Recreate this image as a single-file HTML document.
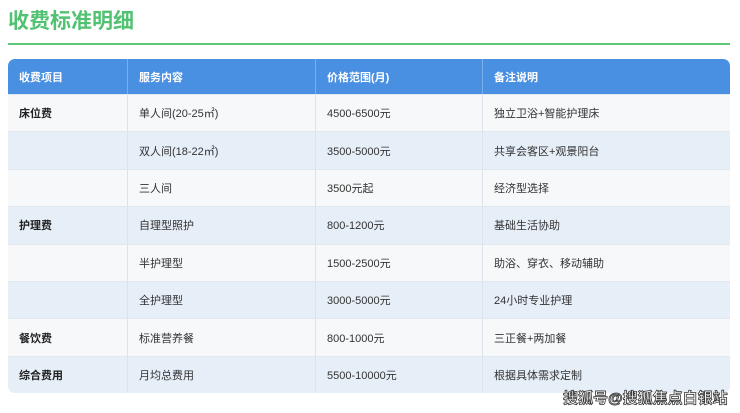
<!DOCTYPE html>
<html><head><meta charset="utf-8"><style>
body{margin:0;width:740px;height:413px;background:#fff;font-family:"Liberation Sans","Noto Sans CJK SC",sans-serif;position:relative;overflow:hidden}
h1{position:absolute;left:8px;top:8px;margin:0;font-size:21px;color:#52c272;font-weight:bold;line-height:28px}
.line{position:absolute;left:8px;top:43px;width:722px;height:2px;background:#5cc878}
table{position:absolute;left:8px;top:59px;width:722px;border-collapse:separate;border-spacing:0;border-radius:7px;overflow:hidden;font-size:11px;color:#333}
th{background:#4a90e2;color:#fff;text-align:left;height:35px;padding:0 0 0 11px;font-weight:bold;border-right:1px solid #79aee9}
th:last-child,td:last-child{border-right:none}
td{height:37.4px;padding:0 0 0 11px;border-right:1px solid #dde3ea;border-top:1px solid #e3e8ee;box-sizing:border-box}
tr:nth-child(odd) td{background:#f7f8fa}
tr:nth-child(even) td{background:#e6eef8}
td.b{font-weight:bold;color:#222}
.wm{position:absolute;left:563px;top:387px;font-size:15px;font-weight:bold;color:#fff;-webkit-text-stroke:0.8px #333;white-space:nowrap}
</style></head><body>
<h1>收费标准明细</h1>
<div class="line"></div>
<table>
<colgroup><col style="width:120px"><col style="width:188px"><col style="width:167px"><col></colgroup>
<thead><tr><th>收费项目</th><th>服务内容</th><th>价格范围(月)</th><th>备注说明</th></tr></thead>
<tbody>
<tr><td class="b">床位费</td><td>单人间(20-25㎡)</td><td>4500-6500元</td><td>独立卫浴+智能护理床</td></tr>
<tr><td></td><td>双人间(18-22㎡)</td><td>3500-5000元</td><td>共享会客区+观景阳台</td></tr>
<tr><td></td><td>三人间</td><td>3500元起</td><td>经济型选择</td></tr>
<tr><td class="b">护理费</td><td>自理型照护</td><td>800-1200元</td><td>基础生活协助</td></tr>
<tr><td></td><td>半护理型</td><td>1500-2500元</td><td>助浴、穿衣、移动辅助</td></tr>
<tr><td></td><td>全护理型</td><td>3000-5000元</td><td>24小时专业护理</td></tr>
<tr><td class="b">餐饮费</td><td>标准营养餐</td><td>800-1000元</td><td>三正餐+两加餐</td></tr>
<tr><td class="b">综合费用</td><td>月均总费用</td><td>5500-10000元</td><td>根据具体需求定制</td></tr>
</tbody></table>
<div class="wm">搜狐号@搜狐焦点白银站</div>
</body></html>
